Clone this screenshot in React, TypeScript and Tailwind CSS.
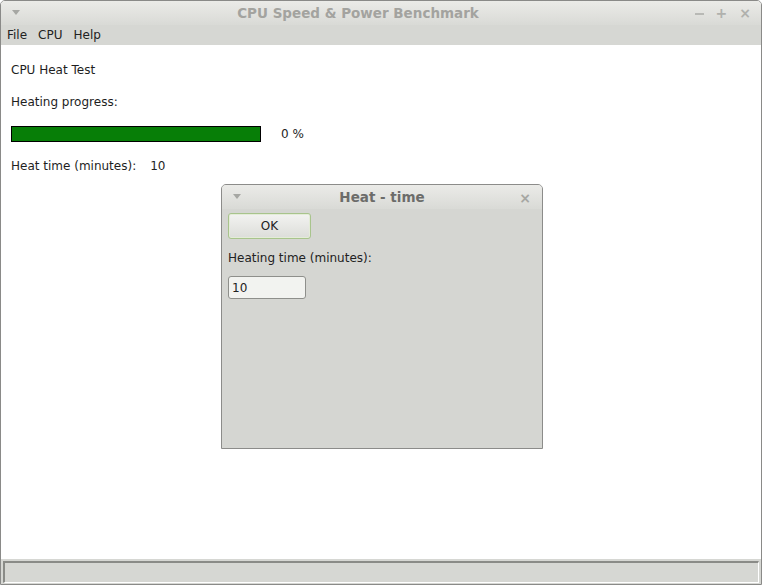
function TitleBar({ title, active }: { title: string; active?: boolean }) {
  return (
    <div className="relative flex h-[24px] shrink-0 items-center bg-gradient-to-b from-[#ebebe8] to-[#d9dad6]">
      <span className="absolute left-[11px] top-[9px] h-0 w-0 border-x-[4px] border-t-[5px] border-x-transparent border-t-[#a6a7a3]" />
      <div
        className={
          "w-full text-center text-[13.5px] font-bold " +
          (active ? "text-[#6c6c6a]" : "pl-[24px] pr-[70px] text-[#a3a39f]")
        }
      >
        {title}
      </div>
    </div>
  );
}

function HeatDialog() {
  return (
    <div className="absolute left-[220px] top-[183px] flex h-[265px] w-[322px] flex-col overflow-hidden rounded-t-[5px] border border-[#8c8c8a] bg-[#d5d6d2]">
      <div className="relative">
        <TitleBar title="Heat - time" active />
        <span className="absolute right-[11px] top-[3px] text-[14px] font-bold text-[#a6a7a3]">×</span>
      </div>
      <div className="flex flex-col px-[6px] pt-[4px] leading-[16px]">
        <button className="h-[26px] w-[83px] rounded-[3px] border border-[#a8c48c] bg-gradient-to-b from-[#f3f3f1] to-[#dcddd9] text-[12px] text-[#222] shadow-[inset_0_0_0_1px_#e4ecd8]">
          OK
        </button>
        <div className="mt-[11px] text-[12px] text-[#222]">Heating time (minutes):</div>
        <div className="mt-[10px] flex h-[23px] w-[78px] items-center rounded-[3px] border border-[#8e8f8b] bg-[#f2f3f0] px-[3px] text-[12px] text-[#222]">
          10
        </div>
      </div>
    </div>
  );
}

export default function App() {
  return (
    <div
      className="relative flex h-[585px] w-[762px] flex-col overflow-hidden rounded-t-[5px] border border-[#8a8a88] bg-white"
      style={{ fontFamily: '"DejaVu Sans", Verdana, sans-serif' }}
    >
      <div className="relative">
        <TitleBar title="CPU Speed & Power Benchmark" />
        <div className="absolute right-[10px] top-[2px] flex items-center gap-[12px] text-[14px] font-bold text-[#b0b1ad]">
          <span className="inline-block h-[2px] w-[9px] bg-[#b8b9b5]" />
          <span>+</span>
          <span>×</span>
        </div>
      </div>
      <div className="flex h-[20px] shrink-0 items-center gap-[11px] bg-[#d6d7d3] px-[6px] text-[12px] text-[#222]">
        <span>File</span>
        <span>CPU</span>
        <span>Help</span>
      </div>

      <div className="flex flex-1 flex-col px-[10px] text-[12px] leading-[16px] text-[#1e1e1e]">
        <div className="mt-[17px]">CPU Heat Test</div>
        <div className="mt-[16px]">Heating progress:</div>
        <div className="mt-[16px] flex items-center">
          <div className="h-[16px] w-[250px] border border-black bg-[#077e07]" />
          <span className="ml-[20px]">0 %</span>
        </div>
        <div className="mt-[16px] flex">
          <span>Heat time (minutes):</span>
          <span className="ml-[14px]">10</span>
        </div>
      </div>

      <div className="flex h-[25px] shrink-0 bg-[#d6d7d3] p-[2px] pb-[1px]">
        <div className="flex-1 border-l-2 border-t-2 border-r border-b border-l-[#8a8b87] border-t-[#8a8b87] border-r-white border-b-white" />
      </div>

      <HeatDialog />
    </div>
  );
}
